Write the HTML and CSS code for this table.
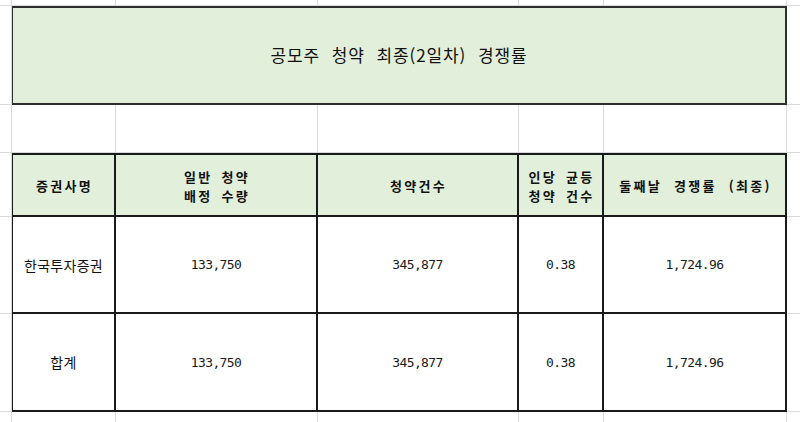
FILE: index.html
```html
<!DOCTYPE html>
<html lang="ko">
<head>
<meta charset="utf-8">
<title>공모주 청약 경쟁률</title>
<link rel="stylesheet" href="styles.css">
</head>
<body>
<div class="sheet">
  <!-- row 0 -->
  <div class="g"></div><div class="g"></div><div class="g"></div><div class="g"></div><div class="g"></div><div class="g"></div><div class="g last"></div>
  <!-- row 1 -->
  <div class="g"></div>
  <div class="title">공모주 청약 최종(2일차) 경쟁률</div>
  <div class="g last"></div>
  <!-- row 2 -->
  <div class="g"></div><div class="g"></div><div class="g"></div><div class="g"></div><div class="g"></div><div class="g"></div><div class="g last"></div>
  <!-- row 3: header -->
  <div class="g"></div>
  <div class="c h top left">증권사명</div>
  <div class="c h top">일반 청약<br>배정 수량</div>
  <div class="c h top">청약건수</div>
  <div class="c h top">인당 균등<br>청약 건수</div>
  <div class="c h top wide">둘째날 경쟁률 (최종)</div>
  <div class="g last"></div>
  <!-- row 4 -->
  <div class="g"></div>
  <div class="c left name">한국투자증권</div>
  <div class="c num">133,750</div>
  <div class="c num">345,877</div>
  <div class="c num">0.38</div>
  <div class="c num">1,724.96</div>
  <div class="g last"></div>
  <!-- row 5 -->
  <div class="g"></div>
  <div class="c left name">합계</div>
  <div class="c num">133,750</div>
  <div class="c num">345,877</div>
  <div class="c num">0.38</div>
  <div class="c num">1,724.96</div>
  <div class="g last"></div>
  <!-- row 6 -->
  <div class="g bottom"></div><div class="g bottom"></div><div class="g bottom"></div><div class="g bottom"></div><div class="g bottom"></div><div class="g bottom"></div><div class="g bottom last"></div>
</div>
</body>
</html>
```

FILE: styles.css
```css
html, body {
  margin: 0;
  padding: 0;
  background: #ffffff;
}

body {
  width: 800px;
  height: 422px;
  overflow: hidden;
  font-family: "Noto Sans CJK KR", "Noto Sans", sans-serif;
  color: #111111;
}

.sheet {
  display: grid;
  grid-template-columns: 12px 104px 202px 201px 85px 183px 1fr;
  grid-template-rows: 6px 99px 48px 64px 97px 98px 1fr;
  width: 800px;
  height: 422px;
}

.g {
  box-sizing: border-box;
  border-right: 1px solid #dadada;
  border-bottom: 1px solid #dadada;
}

.g.last {
  border-right: none;
}

.g.bottom {
  border-bottom: none;
}

.title {
  grid-column: 2 / 7;
  box-sizing: border-box;
  border: 2px solid #2e2e2e;
  border-left-width: 1px;
  background: #e2efda;
  display: flex;
  align-items: center;
  justify-content: center;
  font-size: 17px;
  letter-spacing: 0.9px;
  word-spacing: 6px;
  padding-bottom: 2px;
}

.c {
  box-sizing: border-box;
  border-right: 2px solid #1a1a1a;
  border-bottom: 2px solid #1a1a1a;
  display: flex;
  align-items: center;
  justify-content: center;
  text-align: center;
}

.c.top {
  border-top: 2px solid #1a1a1a;
}

.c.left {
  border-left: 1px solid #1a1a1a;
}

.h {
  background: #e2efda;
  font-weight: 700;
  font-size: 13px;
  line-height: 19px;
  letter-spacing: 2.3px;
  word-spacing: 3px;
  padding-left: 2px;
  padding-top: 1px;
}

.h.wide {
  word-spacing: 6px;
}

.name {
  font-size: 14px;
  letter-spacing: 0.3px;
}

.num {
  font-family: "DejaVu Sans Mono", "Liberation Mono", monospace;
  font-size: 13px;
  letter-spacing: -0.6px;
  color: #1a1a1a;
}
```
